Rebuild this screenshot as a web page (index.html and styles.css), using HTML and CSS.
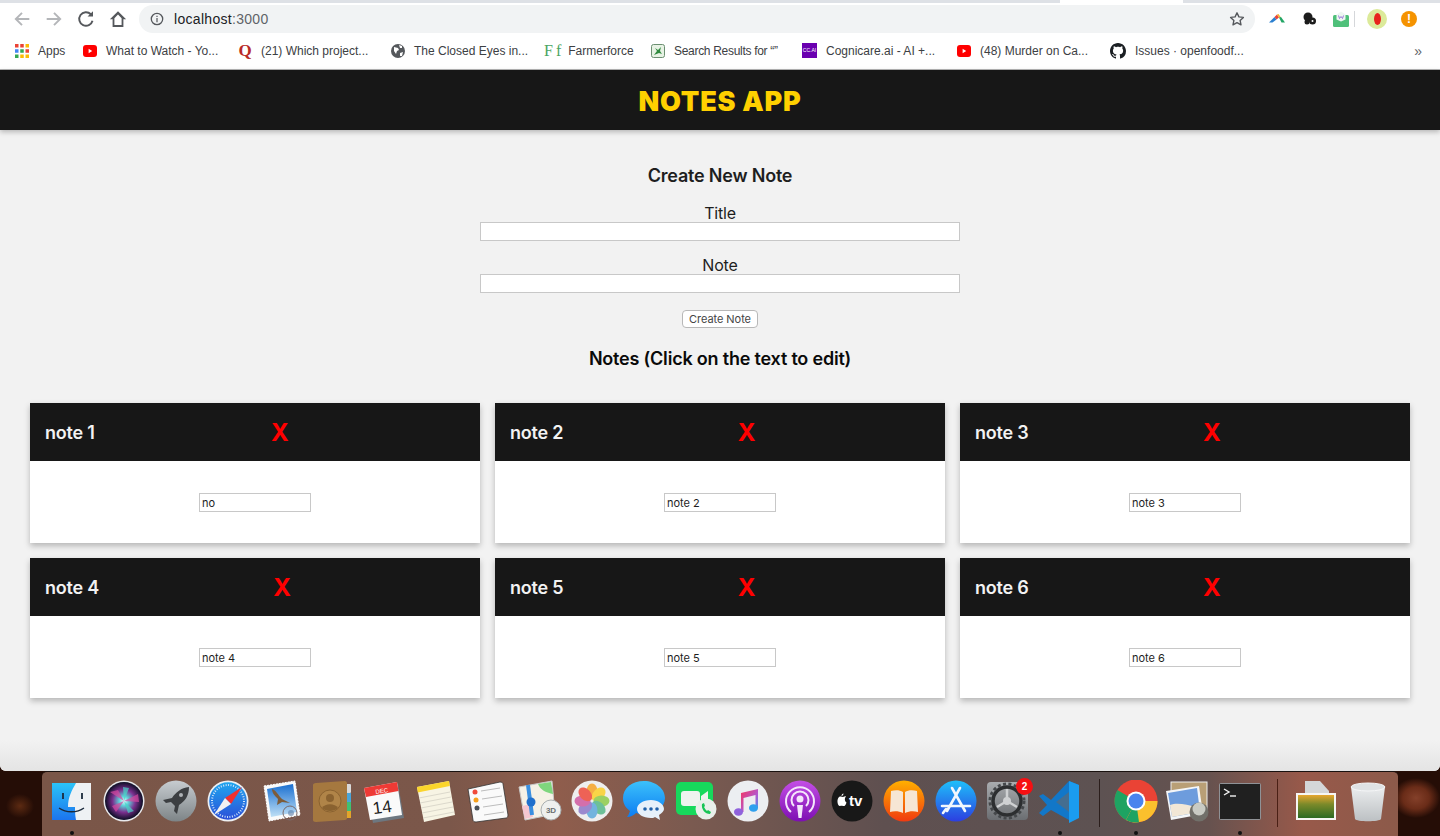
FILE: index.html

```html
<!DOCTYPE html>
<html lang="en">
<head>
  <meta charset="UTF-8" />
  <meta name="viewport" content="width=device-width, initial-scale=1.0" />
  <title>Notes App</title>
  <link rel="stylesheet" href="styles.css">
</head>
<body>
  <div class="desktop">
    <div class="window">
      <div class="tabstrip"></div>

      <div class="toolbar">
        <div class="nav">
          <svg class="nav-icon" viewBox="0 0 16 16"><path d="M14.500 8H2.500M8 2.500L2.500 8 8 13.500" stroke="#b4b6b9" /></svg>
          <svg class="nav-icon" viewBox="0 0 16 16"><path d="M1.500 8h12M8 2.500L13.500 8 8 13.500" stroke="#b4b6b9" /></svg>
          <svg class="nav-icon" viewBox="0 0 16 16"><path d="M13.800 9.500A6 6 0 1 1 12.300 3.800" stroke="#55585c" /><path d="M14.200 1v4.800H9.400z" fill="#55585c" /></svg>
          <svg class="nav-icon" viewBox="0 0 16 16"><path d="M8 1L.8 8.200h2.400V15h9.600V8.200h2.400zM4.800 13.400V7.300L8 4l3.200 3.300v6.100z" fill="#55585c" /></svg>
        </div>
        <div class="urlbar">
          <svg class="info" viewBox="0 0 14 14"><circle cx="7" cy="7" r="5.700" fill="none" stroke="#55585c" stroke-width="1.300" /><path d="M6.400 6h1.200v4.200H6.400zM6.400 3.700h1.200v1.200H6.400z" fill="#55585c" /></svg>
          <span class="url">localhost<span class="url-port">:3000</span></span>
          <svg class="star" viewBox="0 0 16 16"><path d="M8 1.800l1.900 4.100 4.500.5-3.300 3 .9 4.400L8 11.600l-4 2.200.9-4.400-3.300-3 4.500-.5z" fill="none" stroke="#55585c" stroke-width="1.400" stroke-linejoin="round" /></svg>
        </div>
        <div class="extensions">
          <svg class="ext" viewBox="0 0 16 16"><path d="M0 11.500L5.500 6l2 2.500-4 3z" fill="#2a7fd0" /><path d="M5.500 6L8 3.500l2 3-2.500 2z" fill="#e8433a" /><path d="M10 6.500l-2-3 1.500-.5 2.500 3.500z" fill="#f4b32c" /><path d="M10 6.500l2-.5 4 5.500h-3.500z" fill="#22a565" /></svg>
          <svg class="ext" viewBox="0 0 16 16"><circle cx="7" cy="6" r="4.500" fill="#1c1c1c" /><circle cx="11.500" cy="10" r="3.500" fill="#1c1c1c" /><circle cx="6" cy="11" r="2.500" fill="#1c1c1c" /><circle cx="11.500" cy="10" r="1" fill="#fff" /></svg>
          <svg class="ext" viewBox="0 0 16 16"><rect x="0" y="4" width="16" height="12" rx="1.500" fill="#4fc07a" /><path d="M3.500 3.500L8 .5l4.500 3v5L8 10.500l-4.500-2z" fill="#eef7f2" /><path d="M5.500 4.500l1 3L8 5.500l1.500 2 1-3" fill="none" stroke="#9a7bd8" /></svg>
          <span class="toolbar-sep"></span>
          <span class="avatar"><span class="avatar-dot"></span></span>
          <span class="alert">!</span>
        </div>
      </div>

      <div class="bookmarks">
        <a class="bookmark bookmark-apps">
          <svg class="fav" viewBox="0 0 14 14"><g>
            <rect x="0" y="0" width="3.500" height="3.500" fill="#ea4335" /><rect x="5.250" y="0" width="3.500" height="3.500" fill="#ea4335" /><rect x="10.500" y="0" width="3.500" height="3.500" fill="#fbbc05" />
            <rect x="0" y="5.250" width="3.500" height="3.500" fill="#4285f4" /><rect x="5.250" y="5.250" width="3.500" height="3.500" fill="#34a853" /><rect x="10.500" y="5.250" width="3.500" height="3.500" fill="#ea4335" />
            <rect x="0" y="10.500" width="3.500" height="3.500" fill="#34a853" /><rect x="5.250" y="10.500" width="3.500" height="3.500" fill="#fbbc05" /><rect x="10.500" y="10.500" width="3.500" height="3.500" fill="#fbbc05" />
          </g></svg>
          Apps
        </a>
        <a class="bookmark bookmark-wide">
          <svg class="fav" viewBox="0 0 14 14"><rect y="1" width="14" height="12" rx="3" fill="#f00" /><path d="M5.600 4.800v4.400L9.200 7z" fill="#fff" /></svg>
          What to Watch - Yo...
        </a>
        <a class="bookmark">
          <span class="fav fav-quora">Q</span>
          (21) Which project...
        </a>
        <a class="bookmark">
          <svg class="fav" viewBox="0 0 14 14"><circle cx="7" cy="7" r="7" fill="#55585c" /><path d="M3 3l4 1 1 2-2 1-1 3-2-3zM9 9l3-1-1 4-2 0zM8 1l3 1 0 2-2 0z" fill="#fff" /></svg>
          The Closed Eyes in...
        </a>
        <a class="bookmark bookmark-ff">
          <span class="fav-ff">Ff</span>
          Farmerforce
        </a>
        <a class="bookmark bookmark-narrow">
          <svg class="fav" viewBox="0 0 14 14"><rect x=".5" y=".5" width="13" height="13" rx="2" fill="#e7f2e4" stroke="#6b8f71" /><path d="M3 11l3-4-2-3 3 2 3-3-1 4 2 3-3-1z" fill="#2f8a3e" /></svg>
          Search Results for “”
        </a>
        <a class="bookmark bookmark-wide">
          <span class="fav fav-cc">CC.AI</span>
          Cognicare.ai - AI +...
        </a>
        <a class="bookmark">
          <svg class="fav" viewBox="0 0 14 14"><rect y="1" width="14" height="12" rx="3" fill="#f00" /><path d="M5.600 4.800v4.400L9.200 7z" fill="#fff" /></svg>
          (48) Murder on Ca...
        </a>
        <a class="bookmark">
          <svg class="fav fav-gh" viewBox="0 0 16 16"><path fill="#1b1f23" d="M8 0C3.580 0 0 3.580 0 8c0 3.540 2.290 6.530 5.470 7.590.4.070.55-.17.55-.38 0-.19-.01-.82-.01-1.490-2.010.37-2.530-.49-2.690-.94-.09-.23-.48-.94-.82-1.130-.28-.15-.68-.52-.01-.53.63-.01 1.080.58 1.230.82.720 1.210 1.870.87 2.330.66.070-.52.280-.87.510-1.070-1.780-.2-3.640-.89-3.640-3.950 0-.87.310-1.590.820-2.150-.08-.2-.36-1.020.08-2.120 0 0 .67-.21 2.200.82.640-.18 1.320-.27 2-.27s1.360.09 2 .27c1.530-1.040 2.200-.82 2.200-.82.440 1.100.160 1.920.080 2.120.510.560.820 1.270.820 2.150 0 3.070-1.870 3.750-3.650 3.950.290.250.540.730.540 1.480 0 1.070-.01 1.930-.01 2.200 0 .210.150.460.550.380A8.013 8.013 0 0 0 16 8c0-4.420-3.580-8-8-8z" /></svg>
          Issues · openfoodf...
        </a>
        <span class="bookmark-more">»</span>
      </div>

      <div class="page">
        <header class="app-header">
          <h1>NOTES APP</h1>
        </header>

        <main class="content">
          <h2 class="section-title">Create New Note</h2>
          <form class="note-form">
            <label class="form-label" for="title">Title</label>
            <input class="form-input" type="text" id="title" />
            <label class="form-label form-label-next" for="note">Note</label>
            <input class="form-input" type="text" id="note" />
            <button class="create-btn" type="button">Create Note</button>
          </form>

          <h2 class="section-title section-title-notes">Notes (Click on the text to edit)</h2>

          <div class="notes">
            <div class="card">
              <div class="card-head"><span class="card-title">note 1</span><span class="card-del">X</span><span></span></div>
              <div class="card-body"><input class="card-input" type="text" value="no" /></div>
            </div>
            <div class="card">
              <div class="card-head"><span class="card-title">note 2</span><span class="card-del">X</span><span></span></div>
              <div class="card-body"><input class="card-input" type="text" value="note 2" /></div>
            </div>
            <div class="card">
              <div class="card-head"><span class="card-title">note 3</span><span class="card-del">X</span><span></span></div>
              <div class="card-body"><input class="card-input" type="text" value="note 3" /></div>
            </div>
            <div class="card">
              <div class="card-head"><span class="card-title">note 4</span><span class="card-del">X</span><span></span></div>
              <div class="card-body"><input class="card-input" type="text" value="note 4" /></div>
            </div>
            <div class="card">
              <div class="card-head"><span class="card-title">note 5</span><span class="card-del">X</span><span></span></div>
              <div class="card-body"><input class="card-input" type="text" value="note 5" /></div>
            </div>
            <div class="card">
              <div class="card-head"><span class="card-title">note 6</span><span class="card-del">X</span><span></span></div>
              <div class="card-body"><input class="card-input" type="text" value="note 6" /></div>
            </div>
          </div>
        </main>
      </div>
    </div>

    <div class="dock">
      <!-- finder -->
      <div class="dock-item dock-item-finder"><svg class="dock-icon" viewBox="0 0 44 44">
        <defs><linearGradient id="fd" x1="0" y1="0" x2="0" y2="1"><stop offset="0" stop-color="#2bc3f8" /><stop offset="1" stop-color="#1b74ee" /></linearGradient></defs>
        <rect x="2" y="3" width="39" height="37" fill="url(#fd)" />
        <path d="M26 3h15v37H26c-1-5-1-9-1-13h-7c0-10 4-17 8-24z" fill="#eef1f4" />
        <path d="M9 28c7 5 18 5 25 0" fill="none" stroke="#1b2a3c" stroke-width="1.300" />
        <path d="M13 13v6M32 13v6" stroke="#1b2a3c" stroke-width="1.800" />
      </svg></div>
      <!-- siri -->
      <div class="dock-item"><svg class="dock-icon" viewBox="0 0 44 44">
        <defs><radialGradient id="sr"><stop offset="0" stop-color="#e8fbff" /><stop offset=".25" stop-color="#5fd0d8" /><stop offset=".6" stop-color="#7a2f8e" /><stop offset="1" stop-color="#0c0f24" /></radialGradient></defs>
        <circle cx="22" cy="21" r="20.500" fill="#e9e9ec" /><circle cx="22" cy="21" r="19" fill="url(#sr)" />
        <path d="M22 21L8 12l8-2zM22 21l14-7 1 8zM22 21l-8 11-4-6z" fill="#d64aa0" opacity=".7" /><path d="M22 21l10 10-6 2zM22 21L21 7l6 1z" fill="#46d8c8" opacity=".7" />
      </svg></div>
      <!-- launchpad -->
      <div class="dock-item"><svg class="dock-icon" viewBox="0 0 44 44">
        <defs><linearGradient id="lp" x1="0" y1="0" x2="0" y2="1"><stop offset="0" stop-color="#c7ccd0" /><stop offset="1" stop-color="#7d8487" /></linearGradient></defs>
        <circle cx="22" cy="21" r="20.500" fill="url(#lp)" />
        <path d="M35 7c-8 1-13 5-17 11l-9 2 3 3 5-1 4 4-1 5 3 3 2-9c6-4 10-9 10-18z" fill="#3c3f42" /><circle cx="27" cy="15" r="2" fill="#aeb3b6" />
      </svg></div>
      <!-- safari -->
      <div class="dock-item"><svg class="dock-icon" viewBox="0 0 44 44">
        <defs><linearGradient id="sf" x1="0" y1="0" x2="0" y2="1"><stop offset="0" stop-color="#1fa6ef" /><stop offset="1" stop-color="#2b4fd8" /></linearGradient></defs>
        <circle cx="22" cy="21" r="20.500" fill="#eef0f2" /><circle cx="22" cy="21" r="18.800" fill="url(#sf)" />
        <circle cx="22" cy="21" r="16" fill="none" stroke="#cfe4fa" stroke-width="2" stroke-dasharray="1 1.500" />
        <path d="M36 7L19 18l6 6z" fill="#f03030" /><path d="M8 35l17-11-6-6z" fill="#f2f2f2" />
      </svg></div>
      <!-- mail stamp -->
      <div class="dock-item"><svg class="dock-icon" viewBox="0 0 44 44">
        <defs><linearGradient id="ml" x1="0" y1="0" x2="0" y2="1"><stop offset="0" stop-color="#1a6fd0" /><stop offset="1" stop-color="#bfe0f6" /></linearGradient></defs>
        <path d="M6 6l31-5 5 34-31 6z" fill="#fafafa" stroke="#fff" stroke-dasharray="2 1" /><path d="M9 9l26-5 4 28-26 5z" fill="url(#ml)" />
        <path d="M14 9c4 1 6 6 10 10l8 4-8-1-5 3 1-6c-3-3-6-6-6-10z" fill="#7d5c3a" /><circle cx="32" cy="33" r="7" fill="none" stroke="#7a6a6a" /><circle cx="33" cy="33" r="3" fill="#5b7fa8" opacity=".6" />
      </svg></div>
      <!-- contacts -->
      <div class="dock-item"><svg class="dock-icon" viewBox="0 0 44 44">
        <rect x="36" y="4" width="5" height="9" rx="1" fill="#d9d9d9" /><rect x="36" y="13" width="5" height="9" fill="#4aa5d8" /><rect x="36" y="22" width="5" height="9" fill="#41c070" /><rect x="36" y="31" width="5" height="7" fill="#e3a52a" />
        <path d="M3 5c0-1 1-2 3-2l29-2c1 0 2 1 2 2v35c0 1-1 2-2 2L6 42c-2 0-3-1-3-2z" fill="#a5783f" />
        <circle cx="20" cy="21" r="11" fill="#b08448" stroke="#8a6230" /><circle cx="20" cy="18" r="4" fill="#8a6230" /><path d="M12 28c3-5 13-5 16 0-4 4-12 4-16 0z" fill="#8a6230" />
      </svg></div>
      <!-- calendar -->
      <div class="dock-item"><svg class="dock-icon" viewBox="0 0 44 44">
        <path d="M4 9L36 4l6 34-31 5z" fill="#6d7780" /><path d="M2 8L35 2l5 33-32 5z" fill="#fafafa" /><path d="M2 8L35 2l1.500 9-32.500 6z" fill="#ee3a35" />
        <text class="cal-month" x="20" y="13" transform="rotate(-8 20 13)">DEC</text>
        <text class="cal-day" x="21" y="33" transform="rotate(-8 21 33)">14</text>
      </svg></div>
      <!-- notes -->
      <div class="dock-item"><svg class="dock-icon" viewBox="0 0 44 44">
        <path d="M3 7L35 1l6 34-31 7z" fill="#f7f4e4" /><path d="M3 7L35 1l.8 5-32 6.500z" fill="#fbd52c" />
        <path d="M5 18l31-6M6 23l31-6M7 28l31-6M8 33l31-6M9 38l31-6" stroke="#dcd9cc" />
      </svg></div>
      <!-- reminders -->
      <div class="dock-item"><svg class="dock-icon" viewBox="0 0 44 44">
        <path d="M2 9L34 2c2 0 3 1 3 2l5 31c0 2-1 3-2 3L10 42c-2 0-3-1-3-2z" fill="#fafafa" stroke="#333" stroke-width=".8" />
        <circle cx="9" cy="12" r="2.500" fill="#f04a3a" /><circle cx="10" cy="20" r="2.500" fill="#f7a11c" /><circle cx="11" cy="28" r="2.500" fill="#4a5158" />
        <path d="M15 11l19-3M16 19l20-3M17 27l20-3M18 35l20-3" stroke="#bdbdbd" />
      </svg></div>
      <!-- maps -->
      <div class="dock-item"><svg class="dock-icon" viewBox="0 0 44 44">
        <path d="M1 7L34 1l3 33-30 6z" fill="#f5f1e6" stroke="#c7c7c7" /><path d="M20 4l13-2 2 12c-6-1-13-4-15-10z" fill="#7fd67d" /><path d="M4 26l9-2 2 13-8 2z" fill="#f5c6cf" />
        <path d="M10 5l4 30" stroke="#3a8fe0" stroke-width="4" /><circle cx="13" cy="22" r="4.500" fill="#2070cc" />
        <circle cx="33" cy="30" r="10" fill="#eef0ee" stroke="#a9afb0" /><text class="maps-3d" x="33" y="33">3D</text>
      </svg></div>
      <!-- photos -->
      <div class="dock-item"><svg class="dock-icon" viewBox="0 0 44 44">
        <circle cx="22" cy="21" r="20.500" fill="#eeeeee" />
        <g opacity=".85">
          <ellipse cx="22" cy="11.500" rx="5.500" ry="8" fill="#f7a427" /><ellipse cx="22" cy="11.500" rx="5.500" ry="8" fill="#fbd02a" transform="rotate(45 22 21)" /><ellipse cx="22" cy="11.500" rx="5.500" ry="8" fill="#8ecb4a" transform="rotate(90 22 21)" /><ellipse cx="22" cy="11.500" rx="5.500" ry="8" fill="#57b88a" transform="rotate(135 22 21)" />
          <ellipse cx="22" cy="11.500" rx="5.500" ry="8" fill="#5da9dc" transform="rotate(180 22 21)" /><ellipse cx="22" cy="11.500" rx="5.500" ry="8" fill="#8d78c9" transform="rotate(225 22 21)" /><ellipse cx="22" cy="11.500" rx="5.500" ry="8" fill="#d05aa0" transform="rotate(270 22 21)" /><ellipse cx="22" cy="11.500" rx="5.500" ry="8" fill="#ef4a3c" transform="rotate(315 22 21)" />
        </g>
      </svg></div>
      <!-- messages -->
      <div class="dock-item"><svg class="dock-icon" viewBox="0 0 44 44">
        <defs><linearGradient id="ms" x1="0" y1="0" x2="0" y2="1"><stop offset="0" stop-color="#3cc1fb" /><stop offset="1" stop-color="#0c7df2" /></linearGradient></defs>
        <path d="M22 1C10 1 1 8 1 18c0 6 3 10 7 13-1 3-2 5-3 6 4 0 7-2 9-4 2 1 5 1 8 1 12 0 21-7 21-16S34 1 22 1z" fill="url(#ms)" />
        <path d="M29 20c-8 0-14 4-14 9s6 9 14 9c1 0 3 0 4-1l5 3-1-5c3-2 5-4 5-6 0-5-6-9-13-9z" fill="#e6f0fa" />
        <circle cx="23" cy="29" r="1.800" fill="#1f5fa8" /><circle cx="29" cy="29" r="1.800" fill="#1f5fa8" /><circle cx="35" cy="29" r="1.800" fill="#1f5fa8" />
      </svg></div>
      <!-- facetime -->
      <div class="dock-item"><svg class="dock-icon" viewBox="0 0 44 44">
        <rect x="2" y="2" width="37" height="33" rx="5" fill="#17d95c" />
        <rect x="7" y="11" width="19" height="15" rx="3" fill="#eef3ef" /><path d="M27 16l7-5v15l-7-4z" fill="#eef3ef" />
        <circle cx="32" cy="29" r="10.500" fill="#e9efea" /><path d="M28 24c-1 5 3 10 8 10l1-2-3-2-1 1c-1-1-2-2-3-4l1-1-1-3z" fill="#18c455" />
      </svg></div>
      <!-- music -->
      <div class="dock-item"><svg class="dock-icon" viewBox="0 0 44 44">
        <defs><linearGradient id="mu" x1="0" y1="0" x2="1" y2="1"><stop offset="0" stop-color="#f7345e" /><stop offset=".6" stop-color="#b25ad0" /><stop offset="1" stop-color="#2fa0ee" /></linearGradient></defs>
        <circle cx="22" cy="21" r="20.500" fill="#eceef1" />
        <path d="M15 13l17-4v19h-2.500V15L17.500 18v14H15z" fill="url(#mu)" /><ellipse cx="12.500" cy="32" rx="4.500" ry="3.800" fill="#8f62dc" /><ellipse cx="27.500" cy="28" rx="4.500" ry="3.800" fill="#2fa0ee" />
      </svg></div>
      <!-- podcasts -->
      <div class="dock-item"><svg class="dock-icon" viewBox="0 0 44 44">
        <defs><linearGradient id="pd" x1="0" y1="0" x2="0" y2="1"><stop offset="0" stop-color="#c44fe6" /><stop offset="1" stop-color="#7d0fb2" /></linearGradient></defs>
        <circle cx="22" cy="21" r="20.500" fill="url(#pd)" />
        <path d="M13 32a14 14 0 1 1 18 0" fill="none" stroke="#f4e6fb" stroke-width="2" /><path d="M16 26a8.500 8.500 0 1 1 12 0" fill="none" stroke="#f4e6fb" stroke-width="2" />
        <circle cx="22" cy="19" r="3.500" fill="#f4e6fb" /><path d="M19 25h6l-1.500 13h-3z" fill="#f4e6fb" />
      </svg></div>
      <!-- apple tv -->
      <div class="dock-item"><svg class="dock-icon" viewBox="0 0 44 44">
        <circle cx="22" cy="21" r="20.500" fill="#181818" />
        <path d="M9 17c2-1 3 0 4 0 1 0 2-1 3-.5-2 2-1 5 .5 6-1 3-2 4-3.500 3.500-1-.5-2-.5-3 0-2 .5-4-6-1-9zM11.500 16c0-1.500 1-2.500 2-2.500 0 1.500-1 2.500-2 2.500z" fill="#fff" />
        <text class="tv-label" x="19" y="26">tv</text>
      </svg></div>
      <!-- books -->
      <div class="dock-item"><svg class="dock-icon" viewBox="0 0 44 44">
        <defs><linearGradient id="bk" x1="0" y1="0" x2="0" y2="1"><stop offset="0" stop-color="#ffb000" /><stop offset="1" stop-color="#f03a10" /></linearGradient></defs>
        <circle cx="22" cy="21" r="20.500" fill="url(#bk)" />
        <path d="M21 12c-3-2-8-2-12-1l-1 21c4-1 9-1 13 1zM23 12c3-2 8-2 12-1l1 21c-4-1-9-1-13 1z" fill="#f6e6d4" />
      </svg></div>
      <!-- app store -->
      <div class="dock-item"><svg class="dock-icon" viewBox="0 0 44 44">
        <defs><linearGradient id="as" x1="0" y1="0" x2="0" y2="1"><stop offset="0" stop-color="#1ec0fa" /><stop offset="1" stop-color="#2c3ee0" /></linearGradient></defs>
        <circle cx="22" cy="21" r="20.500" fill="url(#as)" />
        <path d="M26 8L13 31M18 8l13 23M8 26h28M9 33l3-4" fill="none" stroke="#f2f7fd" stroke-width="2.600" stroke-linecap="round" />
      </svg></div>
      <!-- system prefs -->
      <div class="dock-item"><svg class="dock-icon" viewBox="0 0 44 44">
        <defs><linearGradient id="sp" x1="0" y1="0" x2="0" y2="1"><stop offset="0" stop-color="#a9acaf" /><stop offset="1" stop-color="#6b6e72" /></linearGradient></defs>
        <rect x="1" y="2" width="41" height="38" rx="4" fill="url(#sp)" />
        <circle cx="21" cy="21" r="14" fill="none" stroke="#2c2e30" stroke-width="3.500" /><circle cx="21" cy="21" r="17" fill="none" stroke="#45484b" stroke-width="3" stroke-dasharray="3 2.400" />
        <circle cx="21" cy="21" r="4" fill="#cfd1d3" /><path d="M21 21V9M21 21l10 6M21 21l-10 6" stroke="#cfd1d3" stroke-width="2.500" />
      </svg><span class="badge">2</span></div>
      <!-- vscode -->
      <div class="dock-item"><svg class="dock-icon" viewBox="0 0 44 44">
        <path d="M31 1L13 20 5 14l-4 2 8 9-8 8 4 3 8-6 18 10 10-4V5z" fill="#1277c8" /><path d="M31 1l10 4v33l-10 5z" fill="#1a9cf0" /><path d="M31 12v20L18 22z" fill="#66696b" opacity=".6" />
      </svg><span class="dot"></span></div>
      <span class="dock-sep"></span>
      <!-- chrome -->
      <div class="dock-item"><svg class="dock-icon" viewBox="0 0 44 44">
        <circle cx="22" cy="21" r="21.500" fill="#ea4335" />
        <path d="M22 21L3.400 10A21.500 21.500 0 0 0 12 40z" fill="#1ea362" /><path d="M22 21h21.500A21.500 21.500 0 0 1 12 40z" fill="#fbc02d" /><path d="M22 21L12 40A21.500 21.500 0 0 0 25 42.300z" fill="#1ea362" />
        <circle cx="22" cy="21" r="9.500" fill="#fff" /><circle cx="22" cy="21" r="7.500" fill="#4a84ee" />
      </svg><span class="dot"></span></div>
      <!-- preview -->
      <div class="dock-item"><svg class="dock-icon" viewBox="0 0 44 44">
        <rect x="5" y="2" width="36" height="28" fill="#b99f76" stroke="#eee" /><path d="M0 11l33-5 4 28-32 6z" fill="#f4f6f8" />
        <path d="M2 13l29-5 3 24-28 5z" fill="#6d9cdd" /><path d="M4 25c8-3 16 0 28 2l2 5-28 5z" fill="#f2e7d6" />
        <circle cx="33" cy="32" r="9.500" fill="#71706a" /><circle cx="33" cy="29" r="6.500" fill="#c9cbc4" />
      </svg></div>
      <!-- terminal -->
      <div class="dock-item"><svg class="dock-icon" viewBox="0 0 44 44">
        <rect x="1" y="3" width="42" height="37" rx="2" fill="#8f9296" /><rect x="2" y="4" width="40" height="35" fill="#202020" />
        <path d="M6 9l5 3-5 3" fill="none" stroke="#f2f2f2" stroke-width="1.400" /><path d="M12 16h6" stroke="#f2f2f2" stroke-width="1.400" />
      </svg><span class="dot"></span></div>
      <span class="dock-sep dock-sep-light"></span>
      <!-- downloaded image -->
      <div class="dock-item"><svg class="dock-icon" viewBox="0 0 44 44">
        <defs><linearGradient id="im" x1="0" y1="0" x2="0" y2="1"><stop offset="0" stop-color="#e6a630" /><stop offset=".4" stop-color="#7c8a2a" /><stop offset="1" stop-color="#2c6a22" /></linearGradient></defs>
        <path d="M11 1h15l9 10v10H11z" fill="#d4d6d8" /><rect x="2" y="13" width="40" height="27" fill="#f6f6f4" /><rect x="4" y="15" width="36" height="23" fill="url(#im)" />
      </svg></div>
      <!-- trash -->
      <div class="dock-item"><svg class="dock-icon" viewBox="0 0 44 44">
        <defs><linearGradient id="tr" x1="0" y1="0" x2="0" y2="1"><stop offset="0" stop-color="#eef0f1" /><stop offset="1" stop-color="#bcc0c3" /></linearGradient></defs>
        <path d="M5 7c6-3 28-3 34 0l-4 32c-1 3-25 3-26 0z" fill="url(#tr)" /><ellipse cx="22" cy="7" rx="17" ry="4" fill="#dfe2e4" stroke="#f5f6f7" />
      </svg></div>
    </div>
  </div>
</body>
</html>
```

FILE: styles.css

```css
* {
  box-sizing: border-box;
}
html, body {
  margin: 0;
  height: 100%;
}
body {
  font-family: Inter, "Liberation Sans", sans-serif;
  overflow: hidden;
}
.desktop {
  height: 836px;
  display: flex;
  flex-direction: column;
  background:
    radial-gradient(ellipse 14px 12px at 20px 806px, #5c2a12 0, transparent 100%),
    radial-gradient(ellipse 24px 20px at 1416px 798px, #84402a 0, #6a2c18 55%, transparent 100%),
    #250d06;
}

/* browser window */
.window {
  height: 771px;
  display: flex;
  flex-direction: column;
  background: #f2f2f2;
  border-radius: 0 0 6px 6px;
  overflow: hidden;
}
.tabstrip {
  height: 3px;
  background: linear-gradient(90deg, #dee1e6 0, #dee1e6 1060px, #fff 1060px, #fff 1183px, #dee1e6 1183px);
}
.toolbar {
  height: 32px;
  display: flex;
  align-items: center;
  background: #fff;
  padding: 0 14px 0 13px;
}
.nav {
  width: 126px;
  display: flex;
  gap: 14px;
}
.nav-icon {
  width: 18px;
  height: 18px;
  fill: none;
  stroke-width: 1.700;
}
.urlbar {
  width: 1116px;
  height: 28px;
  display: flex;
  align-items: center;
  background: #f1f3f4;
  border-radius: 14px;
  padding: 0 10px 0 11px;
}
.info {
  width: 14px;
  height: 14px;
}
.url {
  margin-left: 10px;
  font: 14px "Liberation Sans", sans-serif;
  letter-spacing: .3px;
  color: #202124;
}
.url-port {
  color: #5f6368;
}
.star {
  width: 16px;
  height: 16px;
  margin-left: auto;
}
.extensions {
  flex: 1;
  display: flex;
  align-items: center;
  padding-left: 14px;
}
.ext {
  width: 16px;
  height: 16px;
  margin-right: 16px;
}
.toolbar-sep {
  width: 1px;
  height: 16px;
  background: #d5d7da;
  margin: 0 12px 0 -11px;
}
.avatar {
  width: 20px;
  height: 20px;
  margin-right: 14px;
  display: flex;
  align-items: center;
  justify-content: center;
  background: #dcea9a;
  border-radius: 50%;
}
.avatar-dot {
  width: 7px;
  height: 12px;
  background: #e8231c;
  border-radius: 50%;
}
.alert {
  width: 16px;
  height: 16px;
  background: #f59300;
  border-radius: 50%;
  color: #fff;
  font: bold 12px/16px "Liberation Sans", sans-serif;
  text-align: center;
}
.bookmarks {
  height: 35px;
  display: flex;
  align-items: center;
  padding: 0 18px 3px 15px;
  background: #fff;
  border-bottom: 1px solid #b5b5b5;
  font: 12px "Liberation Sans", sans-serif;
  color: #3c4043;
  white-space: nowrap;
}
.bookmark {
  width: 153px;
  display: flex;
  align-items: center;
  gap: 9px;
}
.bookmark-apps {
  width: 68px;
}
.bookmark-wide {
  width: 155px;
}
.bookmark-narrow {
  width: 151px;
  letter-spacing: -.3px;
}
.bookmark-ff {
  width: 107px;
  gap: 4px;
}
.fav {
  width: 14px;
  height: 14px;
  flex: none;
}
.fav-gh {
  width: 16px;
  height: 16px;
}
.fav-quora {
  font: bold 17px/14px "Liberation Serif", serif;
  color: #b92b27;
  text-align: center;
}
.fav-ff {
  font: 16px/14px "Liberation Serif", serif;
  color: #4aa564;
  letter-spacing: 3px;
}
.fav-cc {
  width: 15px;
  height: 15px;
  background: #6a00b0;
  color: #fff;
  font: 5px/15px "Liberation Sans", sans-serif;
  text-align: center;
}
.bookmark-more {
  margin-left: auto;
  font-size: 14px;
  color: #5f6368;
}

/* the notes page */
.page {
  flex: 1;
  background: linear-gradient(180deg, #f2f2f2 0, #f2f2f2 670px, #e4e4e4 701px);
}
.app-header {
  height: 60px;
  display: flex;
  align-items: center;
  justify-content: center;
  padding-top: 2px;
  background: #171717;
  box-shadow: 0 2px 5px rgba(0, 0, 0, 0.25);
}
.app-header h1 {
  margin: 0;
  font-size: 27px;
  font-weight: 900;
  letter-spacing: .75px;
  color: #ffd000;
}
.content {
  padding: 35px 30px 0;
  text-align: center;
}
.section-title {
  margin: 0;
  font-size: 18px;
  line-height: 22px;
  font-weight: 600;
  letter-spacing: -.2px;
  color: #1e1e1e;
}
.note-form {
  display: flex;
  flex-direction: column;
  align-items: center;
  margin-top: 18px;
}
.form-label {
  font-size: 16px;
  line-height: 17px;
  height: 17px;
  letter-spacing: -.2px;
  color: #1e1e1e;
}
.form-label-next {
  margin-top: 16px;
}
.form-input {
  width: 480px;
  height: 19px;
  padding: 1px 2px;
  background: #fff;
  border: 1px solid #c8c8c8;
  display: block;
}
.create-btn {
  margin-top: 17px;
  width: 76px;
  height: 18px;
  padding: 0;
  background: #fff;
  border: 1px solid #b8b8b8;
  border-radius: 4px;
  font: 11px "Inter", sans-serif;
  letter-spacing: -.05px;
  color: #444;
}
.section-title-notes {
  margin-top: 20px;
  color: #0a0a0a;
}
.notes {
  margin-top: 33px;
  display: grid;
  grid-template-columns: repeat(3, 450px);
  gap: 15px;
}
.card {
  height: 140px;
  background: #fff;
  box-shadow: 0 3px 6px rgba(0, 0, 0, 0.25);
}
.card-head {
  height: 58px;
  display: flex;
  align-items: center;
  justify-content: space-between;
  padding: 0 15px;
  background: #171717;
}
.card-title {
  font-size: 18px;
  font-weight: 600;
  letter-spacing: -.2px;
  color: #f2f2f2;
}
.card-del {
  font-size: 24px;
  font-weight: 700;
  color: #f00;
}
.card-body {
  height: 82px;
  display: flex;
  align-items: center;
  justify-content: center;
}
.card-input {
  width: 112px;
  height: 19px;
  padding: 2px 2px 0;
  border: 1px solid #c8c8c8;
  background: #fff;
  font: 11px Inter, sans-serif;
  color: #1e1e1e;
}

/* dock */
.dock {
  flex: 1;
  width: 1356px;
  margin-left: 42px;
  display: flex;
  padding: 8px 4px 0 4px;
  background: linear-gradient(90deg, #7a5648 0%, #7b574a 30%, #8f5d4c 38%, #7a5a50 48%, #5f5050 62%, #5d5252 78%, #66524f 86%, #98594a 93%, #8c5a4a 100%);
  border-top: 1px solid #1a1210;
  border-radius: 5px 5px 0 0;
}
.dock-item {
  position: relative;
  width: 52px;
  height: 44px;
  display: flex;
  justify-content: center;
}
.dock-icon {
  width: 44px;
  height: 44px;
}
.dot, .dock-item-finder::after {
  content: "";
  position: absolute;
  left: 24px;
  top: 51px;
  width: 4px;
  height: 4px;
  border-radius: 50%;
  background: #111;
}
.badge {
  position: absolute;
  right: 1px;
  top: -2px;
  width: 17px;
  height: 17px;
  border-radius: 50%;
  background: #f60f12;
  color: #fff;
  font: bold 10px/17px "Liberation Sans", sans-serif;
  text-align: center;
}
.dock-sep {
  width: 1px;
  height: 48px;
  margin: -1px 10px 0 13px;
  background: #2b1e1c;
}
.dock-sep-light {
  margin: -1px 12px 0 11px;
  background: #4a2015;
}
.cal-month {
  font: 6px "Liberation Sans", sans-serif;
  fill: #fff;
  text-anchor: middle;
}
.cal-day {
  font: 17px "Liberation Sans", sans-serif;
  fill: #222;
  text-anchor: middle;
}
.maps-3d {
  font: bold 8px "Liberation Sans", sans-serif;
  fill: #6b7072;
  text-anchor: middle;
}
.tv-label {
  font: bold 15px "Liberation Sans", sans-serif;
  fill: #fff;
}
```
